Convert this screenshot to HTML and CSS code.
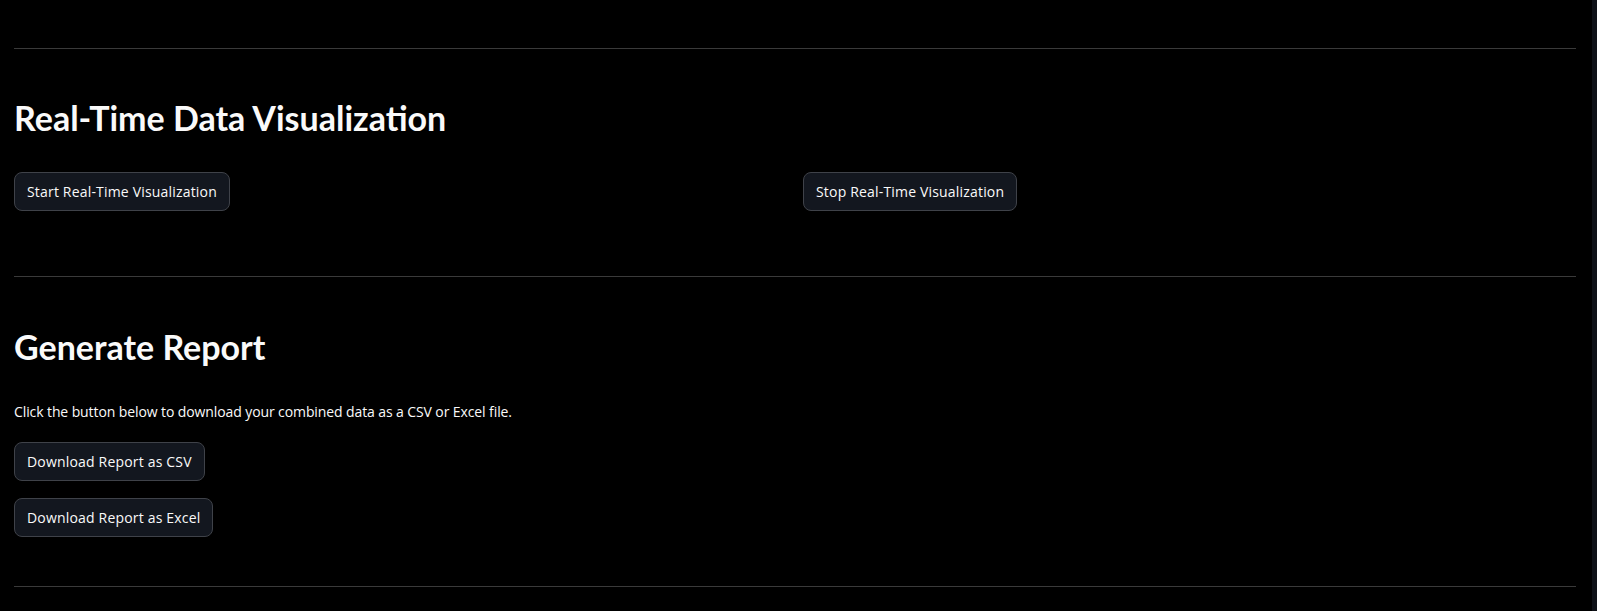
FILE: index.html
```html
<!DOCTYPE html>
<html lang="en">
<head>
<meta charset="utf-8">
<title>Dashboard</title>
<link rel="stylesheet" href="styles.css">
</head>
<body>
<div class="page">
  <main class="main">
    <hr class="divider">
    <section class="section">
      <h2 class="heading">Real-Time Data Visualization</h2>
      <div class="columns">
        <div class="column"><button class="btn" type="button">Start Real-Time Visualization</button></div>
        <div class="column"><button class="btn" type="button">Stop Real-Time Visualization</button></div>
      </div>
    </section>
    <hr class="divider divider-gap-lg">
    <section class="section section-report">
      <h2 class="heading">Generate Report</h2>
      <p class="text">Click the button below to download your combined data as a CSV or Excel file.</p>
      <div class="stack">
        <button class="btn" type="button">Download Report as CSV</button>
        <button class="btn" type="button">Download Report as Excel</button>
      </div>
    </section>
    <hr class="divider divider-gap-md">
  </main>
  <div class="scrollbar"></div>
</div>
</body>
</html>
```
FILE: styles.css
```css
html, body {
  margin: 0;
  padding: 0;
  background: #000000;
  color: #fafafa;
  font-family: "Open Sans", "Noto Sans", sans-serif;
}

.page {
  display: flex;
  height: 611px;
  overflow: hidden;
}

.main {
  flex: 1;
  padding: 48px 16px 0 14px;
  min-width: 0;
}

.scrollbar {
  width: 5px;
  flex: none;
  background: #0e1117;
}

.divider {
  margin: 0;
  border: none;
  height: 1px;
  background: #3a3a3a;
}

.divider-gap-lg { margin-top: 65px; }
.divider-gap-md { margin-top: 49px; }

.section {
  padding-top: 48px;
}

.section-report {
  padding-top: 49px;
}

.heading {
  margin: 0;
  font-family: "Lato", "Open Sans", sans-serif;
  font-size: 34px;
  font-weight: 700;
  line-height: 41px;
  color: #fafafa;
}

.columns {
  display: grid;
  grid-template-columns: 1fr 1fr;
  gap: 16px;
  margin-top: 34px;
}

.column {
  display: flex;
  align-items: flex-start;
}

.btn {
  box-sizing: border-box;
  display: inline-flex;
  align-items: center;
  height: 39px;
  padding: 0 12px;
  border: 1px solid #3f4249;
  border-radius: 8px;
  background: #13171f;
  color: #fafafa;
  font-family: "Open Sans", "Noto Sans", sans-serif;
  font-size: 14px;
  line-height: 20px;
  letter-spacing: 0.18px;
  cursor: pointer;
}

.text {
  margin: 35px 0 0;
  font-size: 14px;
  line-height: 20px;
  letter-spacing: -0.1px;
}

.stack {
  display: flex;
  flex-direction: column;
  align-items: flex-start;
  gap: 17px;
  margin-top: 20px;
}
```
